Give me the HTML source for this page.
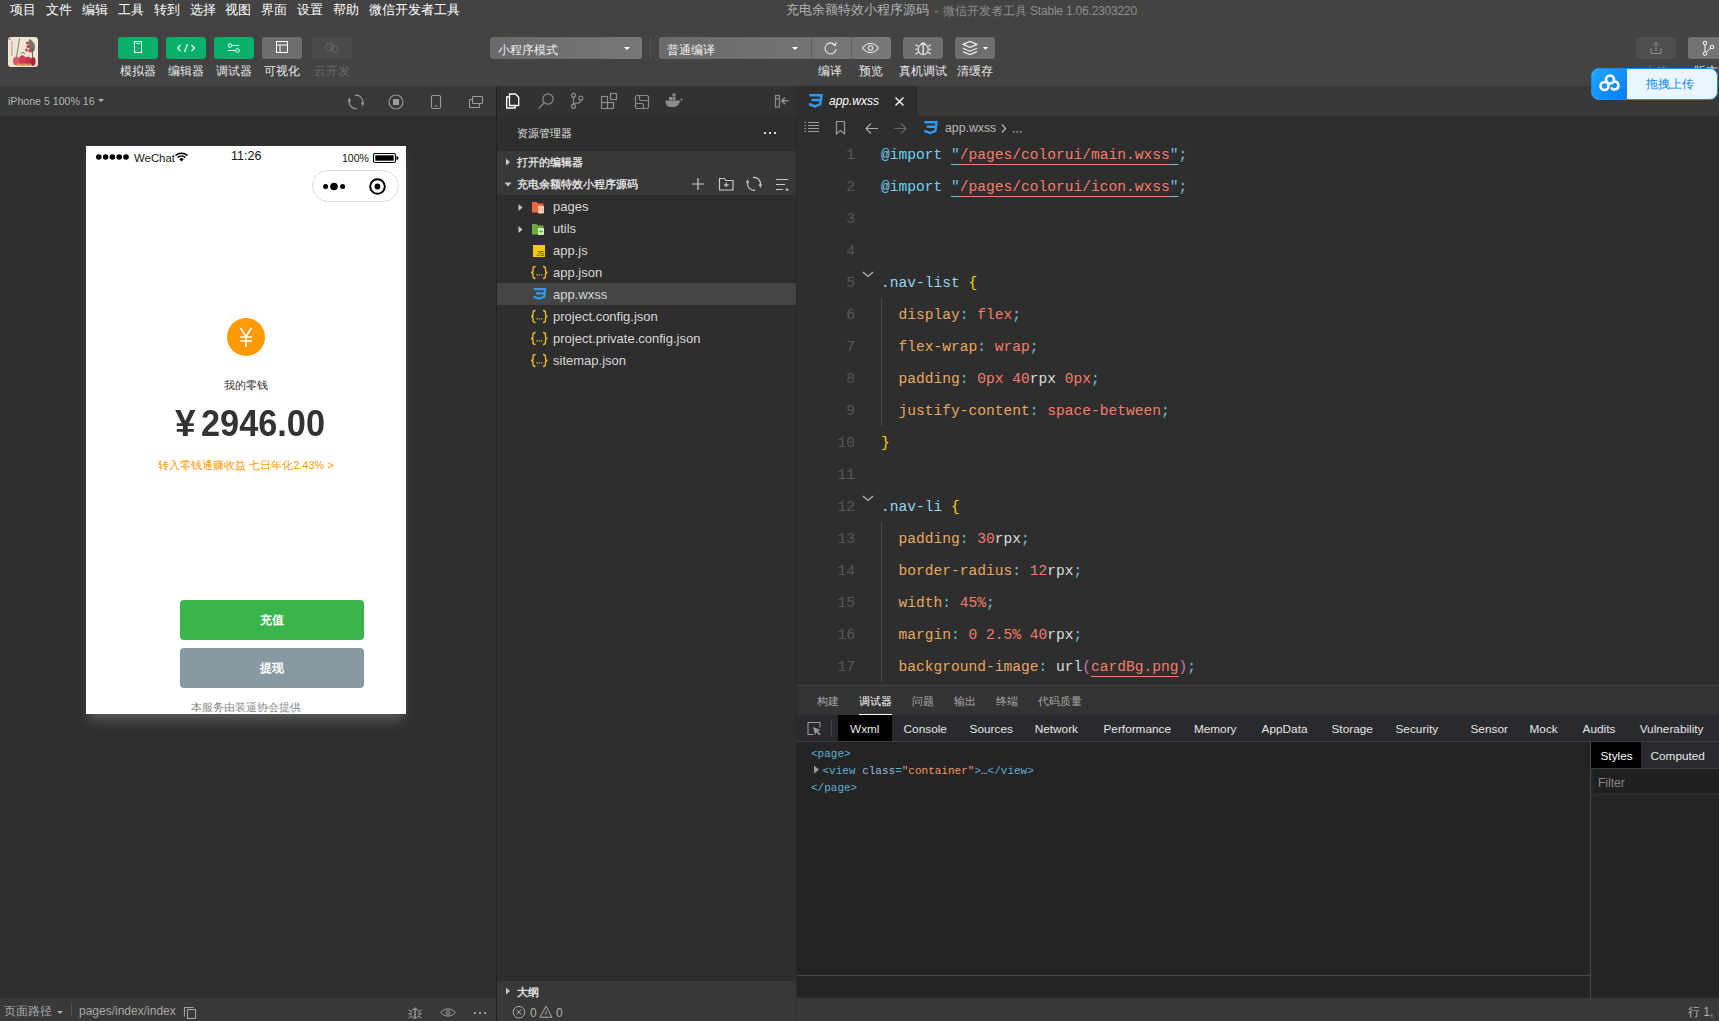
<!DOCTYPE html>
<html><head><meta charset="utf-8">
<style>
*{margin:0;padding:0;box-sizing:border-box}
html,body{width:1719px;height:1021px;overflow:hidden;background:#2e2e2e;font-family:"Liberation Sans",sans-serif;color:#ddd}
.a{position:absolute}
svg{position:absolute;overflow:visible}
#top{left:0;top:0;width:1719px;height:86px;background:#434343}
.menu{top:1.5px;font-size:13px;color:#fff;line-height:16px;white-space:nowrap}
.title{top:2px;left:786px;font-size:12px;color:#8e8e8e;line-height:16px;white-space:nowrap}
.tb{top:37px;width:40px;height:22px;border-radius:3px;background:#07b06a}
.tbl{top:63px;font-size:12px;color:#e8e8e8;line-height:16px;white-space:nowrap;text-align:center;width:60px}
.dd{top:37px;height:22px;border-radius:3px;background:linear-gradient(90deg,#6a6a6a,#777)}
.ddt{top:1.5px;font-size:12px;color:#f0f0f0;line-height:22px;white-space:nowrap}
/* simulator */
#simh{left:0;top:86px;width:496px;height:30px;background:#383838}
#simb{left:0;top:116px;width:496px;height:882px;background:#2f2f2f}
#sims{left:0;top:998px;width:496px;height:23px;background:#393939}
#div1{left:496px;top:86px;width:1px;height:935px;background:#222}
#phone{left:86px;top:146px;width:320px;height:568px;background:#fff;overflow:hidden;box-shadow:0 9px 11px -3px rgba(125,125,125,.55)}
/* explorer */
#exp{left:497px;top:86px;width:300px;height:935px;background:#2e2e2e}
.row{left:0;width:299px;height:22px;line-height:22px;font-size:13px;color:#d8d8d8;white-space:nowrap}
.sec{left:0;width:299px;height:22px;line-height:22px;font-size:11px;font-weight:bold;color:#ddd;background:#383838;white-space:nowrap}
/* editor */
#ed{left:797px;top:86px;width:922px;height:600px;background:#2e2e2e}
#tabs{left:0;top:0;width:922px;height:30px;background:#383838}
.ln{left:0;width:58px;text-align:right;font-family:"Liberation Mono",monospace;font-size:14.58px;color:#575757;line-height:32px;height:32px}
.cl{left:84px;font-family:"Liberation Mono",monospace;font-size:14.58px;line-height:32px;height:32px;white-space:pre;color:#d4d4d4}
.k{color:#e9a75f}.v{color:#f47d6b}.s{color:#f47d6b}.q{color:#6fc3df}.sel{color:#93d6ef}.b{color:#ffd700}.w{color:#dcdcdc}.p{color:#d16fd1}.at{color:#6fcff3}.u{text-decoration:underline;text-underline-offset:5px;text-decoration-thickness:1px}
/* bottom panel */
#bp{left:797px;top:685px;width:922px;height:313px;background:#242424}
#bph{left:0;top:0;width:922px;height:30px;background:#333;border-top:1px solid #444}
#dtt{left:0;top:30px;width:922px;height:27px;background:#292a2d;border-bottom:1px solid #3d3d3d}
.dt{top:1.5px;height:25px;line-height:25px;font-size:11.8px;color:#e6e6e6;white-space:nowrap}
.bt{top:8px;font-size:11.4px;line-height:15px;color:#a8a8a8;white-space:nowrap}
.xm{font-family:"Liberation Mono",monospace;font-size:11px;line-height:16px;white-space:pre;color:#ccc}
.tg{color:#5db0d7}.an{color:#9bbbdc}.av{color:#f29766}.wh{color:#ccc}
.or{top:312px;font-size:11px;line-height:14px;color:#fe9a06;white-space:nowrap}
#sbar{left:797px;top:998px;width:922px;height:23px;background:#393939}
</style></head><body>
<div class="a" id="top">
  <div class="a menu" style="left:10px">项目</div>
  <div class="a menu" style="left:46px">文件</div>
  <div class="a menu" style="left:82px">编辑</div>
  <div class="a menu" style="left:118px">工具</div>
  <div class="a menu" style="left:154px">转到</div>
  <div class="a menu" style="left:190px">选择</div>
  <div class="a menu" style="left:225px">视图</div>
  <div class="a menu" style="left:261px">界面</div>
  <div class="a menu" style="left:297px">设置</div>
  <div class="a menu" style="left:333px">帮助</div>
  <div class="a menu" style="left:369px">微信开发者工具</div>
  <div class="a title" style="font-size:13px;color:#b4b4b4">充电余额特效小程序源码</div><div class="a title" style="left:934.3px;top:3px">-</div><div class="a title" style="left:942.7px;top:3px">微信开发者工具</div><div class="a title" style="left:1030px;top:3px;letter-spacing:-.2px">Stable 1.06.2303220</div>
  <!-- avatar -->
  <div class="a" style="left:8px;top:37px;width:30px;height:30px;border-radius:3px;background:#eee5d2;overflow:hidden">
    <svg width="30" height="30" style="filter:blur(.35px)">
      <rect x="3" y="4" width="1.6" height="15" fill="#9c948a" opacity=".55"/>
      <rect x="1" y="1.5" width="1.2" height="1.5" fill="#c44"/>
      <path d="M11.5 1C10.5 8 9.5 15 8 22" stroke="#5a5550" stroke-width=".9" fill="none" opacity=".8"/>
      <path d="M24.5 12V29" stroke="#4e4a44" stroke-width="1" fill="none" opacity=".8"/>
      <path d="M21 2c3 1 6 4 6 8s-2 5-4 6c-1-3-3-6-2-14z" fill="#55554c" opacity=".8"/>
      <circle cx="19.5" cy="6" r="1.6" fill="#c73a52"/><circle cx="20" cy="9.5" r="1.5" fill="#c73a52"/><circle cx="18.5" cy="13" r="1.4" fill="#c94057"/><circle cx="21.5" cy="14" r="1.4" fill="#c94057"/><circle cx="22.5" cy="11" r="1" fill="#c94057"/>
      <ellipse cx="8.5" cy="24" rx="3.6" ry="4.3" fill="#d8596e"/>
      <ellipse cx="14.5" cy="23.5" rx="3.8" ry="5.2" fill="#cf3c56"/>
      <ellipse cx="20" cy="24" rx="3.2" ry="4.3" fill="#c8324b"/>
      <ellipse cx="25" cy="24.5" rx="2.6" ry="4.3" fill="#a82a3a"/>
      <rect x="9" y="26.5" width="14" height="2.5" fill="#d9a44a" opacity=".7"/>
      <path d="M13 17l2-2 2 2" stroke="#4c6b4c" stroke-width=".8" fill="none"/>
    </svg>
  </div>
  <!-- green buttons -->
  <div class="a tb" style="left:118px"><svg width="40" height="22"><rect x="16.5" y="4.5" width="7" height="11" fill="none" stroke="#fff" stroke-width="1"/><line x1="18" y1="6.5" x2="22" y2="6.5" stroke="#fff"/></svg></div>
  <div class="a tb" style="left:166px"><svg width="40" height="22"><path d="M14.5 8l-3 3 3 3M25.5 8l3 3-3 3M21.5 7l-3 8" fill="none" stroke="#fff" stroke-width="1.1"/></svg></div>
  <div class="a tb" style="left:214px"><svg width="40" height="22"><line x1="14" y1="8.5" x2="25" y2="8.5" stroke="#fff"/><line x1="14" y1="13.5" x2="25" y2="13.5" stroke="#fff"/><circle cx="16" cy="8.5" r="1.8" fill="#07b06a" stroke="#fff"/><circle cx="23.5" cy="13.5" r="1.8" fill="#07b06a" stroke="#fff"/></svg></div>
  <div class="a tb" style="left:262px;background:#6e6e6e"><svg width="40" height="22"><rect x="14.5" y="4.5" width="11" height="11" fill="none" stroke="#fff"/><line x1="14.5" y1="8" x2="25.5" y2="8" stroke="#fff"/><line x1="18" y1="8" x2="18" y2="15.5" stroke="#fff"/></svg></div>
  <div class="a tb" style="left:312px;background:#4b4b4b"><svg width="40" height="22"><circle cx="17.5" cy="10" r="3.8" fill="none" stroke="#6a6a6a"/><circle cx="22.5" cy="12" r="3.5" fill="none" stroke="#6a6a6a"/></svg></div>
  <div class="a tbl" style="left:108px">模拟器</div>
  <div class="a tbl" style="left:156px">编辑器</div>
  <div class="a tbl" style="left:204px">调试器</div>
  <div class="a tbl" style="left:252px">可视化</div>
  <div class="a tbl" style="left:302px;color:#6a6a6a">云开发</div>
  <!-- dropdowns -->
  <div class="a dd" style="left:490px;width:152px"><div class="a ddt" style="left:8px">小程序模式</div><svg width="152" height="22"><path d="M134 10h6l-3 3z" fill="#fff"/></svg></div>
  <div class="a" style="left:650px;top:37px;width:1px;height:22px;background:#555"></div>
  <div class="a dd" style="left:659px;width:232px;background:linear-gradient(90deg,#6b6b6b,#787878)">
    <div class="a ddt" style="left:8px">普通编译</div>
    <svg width="232" height="22"><path d="M133 10h6l-3 3z" fill="#fff"/>
      <line x1="152.5" y1="0" x2="152.5" y2="22" stroke="#5e5e5e"/><line x1="192.5" y1="0" x2="192.5" y2="22" stroke="#5e5e5e"/>
      <path d="M176 8.2A5.5 5.5 0 1 0 177 12" fill="none" stroke="#e8e8e8" stroke-width="1.1"/><path d="M173.5 7.2l2.8 1.2 0.8-3" fill="none" stroke="#e8e8e8" stroke-width="1.1"/>
      <path d="M203.5 11c2.5-3.5 5-4.5 8-4.5s5.5 1 8 4.5c-2.5 3.5-5 4.5-8 4.5s-5.5-1-8-4.5z" fill="none" stroke="#e8e8e8" stroke-width="1.1"/><circle cx="211.5" cy="11" r="2.2" fill="none" stroke="#e8e8e8" stroke-width="1.1"/>
    </svg>
  </div>
  <div class="a tb" style="left:903px;background:#6e6e6e"><svg width="40" height="22"><g fill="none" stroke="#eaeaea" stroke-width="1.1"><ellipse cx="20.2" cy="12.4" rx="5" ry="5.3"/><path d="M18 7.2a2.4 2.2 0 0 1 4.4 0"/><path d="M15.2 9.3l-2.8-1.6M15 12.2h-2.8M15.3 15.2l-2.8 2M25.2 9.3l2.8-1.6M25.4 12.2h2.8M25.1 15.2l2.8 2"/></g><line x1="20.2" y1="7.5" x2="20.2" y2="17.5" stroke="#d8d8d8" stroke-width="1.6"/></svg></div>
  <div class="a tb" style="left:955px;background:#6e6e6e"><svg width="40" height="22"><g fill="none" stroke="#eaeaea" stroke-width="1.2" stroke-linejoin="round"><path d="M8 7.4l7-3 7 3-7 3z"/><path d="M8 11.2l7 3 7-3M8 14.6l7 3 7-3"/></g><path d="M28 10h5l-2.5 2.8z" fill="#fff"/></svg></div>
  <div class="a tbl" style="left:800px">编译</div>
  <div class="a tbl" style="left:841px">预览</div>
  <div class="a tbl" style="left:893px">真机调试</div>
  <div class="a tbl" style="left:945px">清缓存</div>
  <div class="a tbl" style="left:1626px;color:#777">上传</div>
  <div class="a tbl" style="left:1678px;width:80px">版本管理</div>
  <!-- right buttons -->
  <div class="a tb" style="left:1636px;background:#4e4e4e"><svg width="40" height="22"><path d="M15 11v5.5h10V11" fill="none" stroke="#8a8a8a"/><path d="M20 14V5.5M17 8.5l3-3 3 3" fill="none" stroke="#8a8a8a"/></svg></div>
  <div class="a tb" style="left:1688px;width:40px;background:#737373"><svg width="40" height="22"><circle cx="17" cy="6" r="1.8" fill="none" stroke="#fff"/><circle cx="17" cy="16.5" r="1.8" fill="none" stroke="#fff"/><circle cx="24" cy="10" r="1.8" fill="none" stroke="#fff"/><line x1="17" y1="8" x2="17" y2="14.5" stroke="#fff"/><line x1="18.6" y1="15.2" x2="22.4" y2="11.1" stroke="#fff"/></svg></div>
</div>

<div class="a" id="simh">
  <div class="a" style="left:8px;top:8px;font-size:10.6px;line-height:14px;color:#b4b4b4;white-space:nowrap">iPhone 5 100% 16</div>
  <svg width="496" height="30"><path d="M98 13h6l-3 3z" fill="#b4b4b4"/>
    <g fill="none" stroke="#9a9a9a" stroke-width="1.1">
      <path d="M354.8 9.2A6.8 6.8 0 0 1 362.7 17M357.2 22.6A6.8 6.8 0 0 1 349.3 14.8"/>
      <circle cx="396" cy="16" r="7"/>
      <rect x="431.5" y="9.5" width="9" height="13" rx="1.2"/><line x1="434.5" y1="20" x2="437.5" y2="20"/>
      <rect x="472.5" y="10.5" width="10" height="7" rx="0.8"/><path d="M472.5 13.5h-3v8h10v-4"/>
    </g>
    <rect x="393" y="13" width="6" height="6" fill="#9a9a9a"/><path d="M360.9 16.5h3.6l-1.8 3.8zM347.5 15.3h3.6l-1.8-3.8z" fill="#9a9a9a"/>
  </svg>
</div>
<div class="a" id="simb"></div>
<div class="a" id="sims">
  <div class="a" style="left:4px;top:6px;font-size:12px;line-height:15px;color:#a8a8a8;white-space:nowrap">页面路径</div>
  <svg width="496" height="23"><path d="M57 13h6l-3 3z" fill="#a8a8a8"/><line x1="71.5" y1="6" x2="71.5" y2="18" stroke="#555"/>
    <g fill="none" stroke="#a0a0a0" stroke-width="1.1"><rect x="187.5" y="11.5" width="8" height="9"/><path d="M184.5 18.5v-9h9"/></g>
    <g fill="none" stroke="#a0a0a0" stroke-width="1"><ellipse cx="415" cy="15.6" rx="4.2" ry="4.5"/><path d="M413.2 11.3a1.9 1.8 0 0 1 3.6 0"/><line x1="415" y1="11.5" x2="415" y2="20" stroke-width="1.4"/><path d="M411 13.4l-2.5-1.4M410.8 15.9h-2.6M411 18.4l-2.5 1.7M419 13.4l2.5-1.4M419.2 15.9h2.6M419 18.4l2.5 1.7"/>
    <path d="M441 14.5c2-2.8 4-3.5 7-3.5s5 .7 7 3.5c-2 2.8-4 3.5-7 3.5s-5-.7-7-3.5z"/><circle cx="448" cy="14.5" r="1.8"/></g>
    <g fill="#a0a0a0"><rect x="474" y="14" width="2" height="2"/><rect x="479" y="14" width="2" height="2"/><rect x="484" y="14" width="2" height="2"/></g>
  </svg>
  <div class="a" style="left:79px;top:6px;font-size:12px;line-height:15px;color:#a8a8a8;white-space:nowrap">pages/index/index</div>
</div>
<div class="a" id="div1"></div>
<div class="a" id="phone">
  <svg width="320" height="60">
    <g fill="#000"><circle cx="12.8" cy="11" r="2.8"/><circle cx="19.6" cy="11" r="2.8"/><circle cx="26.4" cy="11" r="2.8"/><circle cx="33.2" cy="11" r="2.8"/><circle cx="40" cy="11" r="2.8"/></g>
    <path d="M89.5 9.5a9 9 0 0 1 12 0M91.5 11.5a6 6 0 0 1 8 0" fill="none" stroke="#000" stroke-width="1.6"/><path d="M93.3 13.2a3 3 0 0 1 4.4 0L95.5 15.5z" fill="#000"/>
    <rect x="287.5" y="7.5" width="22" height="9" rx="1.5" fill="none" stroke="#000" stroke-width="1.1"/><rect x="289.3" y="9.3" width="18.4" height="5.4" fill="#000"/><path d="M310.5 10v4a2 2 0 0 0 0-4z" fill="#000"/>
    <rect x="226.5" y="24.5" width="86" height="31" rx="15.5" fill="#fff" stroke="#dcdcdc"/>
    <circle cx="239.6" cy="40.5" r="2.5" fill="#000"/><circle cx="248" cy="40.5" r="3.8" fill="#000"/><circle cx="256.6" cy="40.5" r="2.5" fill="#000"/>
    <circle cx="291.5" cy="40.5" r="7.3" fill="none" stroke="#000" stroke-width="2"/><circle cx="291.5" cy="40.5" r="2.9" fill="#000"/>
  </svg>
  <div class="a" style="left:48px;top:4.5px;font-size:11.4px;line-height:14px;color:#222;white-space:nowrap">WeChat</div>
  <div class="a" style="left:145px;top:3px;font-size:12.5px;line-height:15px;color:#111;white-space:nowrap">11:26</div>
  <div class="a" style="left:256px;top:6px;font-size:10.5px;line-height:12px;color:#111;white-space:nowrap">100%</div>
  <div class="a" style="left:141px;top:171.5px;width:38px;height:38px;border-radius:50%;background:#fe9a06"></div>
  <svg width="320" height="240" style="top:0"><path d="M154.5 182l5.5 8.5 5.5-8.5M160 190.5v10.5M154 191h12M154 195h12" fill="none" stroke="#fff" stroke-width="1.7"/></svg>
  <div class="a" style="left:0;top:232px;width:320px;text-align:center;font-size:11px;line-height:14px;color:#333">我的零钱</div>
  <div class="a" id="yen" style="left:89px;transform:scale(1.06,1.05);transform-origin:0 29px;top:258px;font-size:35px;font-weight:bold;line-height:40px;color:#333;white-space:nowrap">¥</div><div class="a" id="amt" style="left:115px;top:258px;font-size:35px;font-weight:bold;line-height:40px;color:#333;white-space:nowrap;transform:scale(.98,1.04);transform-origin:0 29px">2946.00</div>
  <div class="a or" style="left:72.1px">转入零钱通赚收益</div><div class="a or" style="left:163.2px">七日年化</div><div class="a or" style="left:207.2px">2.43% &gt;</div>
  <div class="a" style="left:94px;top:454px;width:184px;height:40px;border-radius:4px;background:#39b54a;color:#fff;font-size:12px;font-weight:bold;line-height:40px;text-align:center">充值</div>
  <div class="a" style="left:94px;top:502px;width:184px;height:40px;border-radius:4px;background:#8799a3;color:#fff;font-size:12px;font-weight:bold;line-height:40px;text-align:center">提现</div>
  <div class="a" style="left:0;top:553px;width:320px;text-align:center;font-size:11px;line-height:16px;color:#888;white-space:nowrap">本服务由装逼协会提供</div>
</div>

<div class="a" id="exp">
  <div class="a" style="left:299px;top:30px;width:1px;height:865px;background:#282828"></div>
  <div class="a" style="left:0;top:0;width:299px;height:29.5px;background:#323232"></div>
  <svg width="300" height="300">
    <!-- files icon -->
    <g fill="none" stroke="#fff" stroke-width="1.3" transform="translate(0,1.5)"><path d="M12.5 9.5h-2.8v11h8.5v-2.6"/><path d="M12.5 6.5h6l3.2 3.2v8.3h-9.2z"/></g>
    <g fill="none" stroke="#8c8c8c" stroke-width="1.2">
      <circle cx="51" cy="13" r="5.2"/><line x1="47.3" y1="16.8" x2="41.5" y2="22.5"/>
      <circle cx="76.5" cy="9.3" r="2"/><circle cx="76.5" cy="20.3" r="2"/><circle cx="83.8" cy="12.2" r="2"/><line x1="76.5" y1="11.3" x2="76.5" y2="18.3"/><path d="M83.8 14.2c0 2.5-1.5 3-7.3 3.3"/>
      <rect x="104.5" y="10.5" width="6" height="6"/><rect x="104.5" y="16.5" width="6" height="6"/><rect x="110.5" y="16.5" width="6" height="6"/><rect x="113.5" y="7.5" width="6" height="6"/>
      <rect x="138.5" y="9.5" width="13" height="13" rx="1.5"/><path d="M142.5 9.5V13q0 1.5 1.5 1.5h7.5M138.5 17.5h6.5q1.5 0 1.5 1.5v3.5"/>
      <rect x="278.5" y="9.5" width="4" height="11.5"/><path d="M278.5 12.8h4"/>
    </g>
    <path d="M168.5 14.5h14.5c-.5 4-3 6.5-7.5 6.5h-2c-3.5 0-5-2.5-5-6.5z" fill="#8c8c8c"/><rect x="172" y="11" width="3" height="3" fill="#8c8c8c"/><rect x="175.5" y="11" width="3" height="3" fill="#8c8c8c"/><rect x="175.5" y="7.5" width="3" height="3" fill="#8c8c8c"/><path d="M183 13.5l2.5-1.5-.5 3z" fill="#8c8c8c"/>
    <!-- more -->
    <g fill="#ddd"><rect x="267" y="46" width="2" height="2"/><rect x="272" y="46" width="2" height="2"/><rect x="277" y="46" width="2" height="2"/></g><path d="M285 14.8h6.5M288 11.5l-3.2 3.3 3.2 3.3" fill="none" stroke="#8c8c8c" stroke-width="1.6"/>
  </svg>
  <div class="a" style="left:20px;top:40px;font-size:11px;line-height:14px;color:#e0e0e0;white-space:nowrap">资源管理器</div>
  <div class="a sec" style="top:65px"><svg width="20" height="22"><path d="M9 7.5l4 3.5-4 3.5z" fill="#c8c8c8"/></svg><div class="a" style="left:20px;top:0">打开的编辑器</div></div>
  <div class="a sec" style="top:87px;height:22px"><svg width="300" height="22"><path d="M7.5 9.5h7l-3.5 4z" fill="#c8c8c8"/>
    <g fill="none" stroke="#c8c8c8" stroke-width="1.2"><path d="M201 5v12M195 11h12"/><path d="M222.5 5.5v11.5h13.5v-9.5h-7l-1.5-2z"/><path d="M229.3 9.5v4.5M227 11.8h4.6"/>
    <path d="M255.9 4.4A6.5 6.5 0 0 1 263.4 11.9M258.1 17.2A6.5 6.5 0 0 1 250.6 9.7"/>
    <path d="M279 6.5h12M279 11.5h9M279 16.5h7"/></g><path d="M288 17.5l2-2.5 2 2.5z" fill="#c8c8c8"/><path d="M261.7 11.3h3.4l-1.7 3.6zM248.9 9.8h3.4l-1.7-3.6z" fill="#c8c8c8"/></svg>
    <div class="a" style="left:20px;top:0">充电余额特效小程序源码</div></div>
  <!-- tree -->
  <div class="a" style="left:0;top:197px;width:299px;height:22px;background:#454545"></div>
  <svg width="300" height="300" style="top:110px">
    <path d="M21.5 8l4 3.5-4 3.5z" fill="#c8c8c8"/><path d="M21.5 30l4 3.5-4 3.5z" fill="#c8c8c8"/>
    <!-- pages folder -->
    <path d="M35 6h4.5l1.5 1.5h5.5v9H35z" fill="#f2673e"/><rect x="41" y="10" width="6" height="7.5" rx="1" fill="#ffcfbf"/><path d="M43 12.5l-1 1.2 1 1.2M45 12.5l1 1.2-1 1.2" stroke="#e85a33" stroke-width=".6" fill="none"/>
    <!-- utils folder -->
    <path d="M35 28h4.5l1.5 1.5h5.5v9H35z" fill="#6aab3b"/><rect x="41" y="32" width="6" height="7" rx="1" fill="#d6f0c0"/><path d="M44 33.5v4M42 35.5h4" stroke="#5aa02e" stroke-width=".8"/>
    <!-- js -->
    <rect x="36" y="49" width="12" height="12" fill="#f5c518"/><text x="39.5" y="59.5" font-family="Liberation Sans" font-size="6.5" fill="#333">JS</text>
    <!-- json braces -->
    <g transform="translate(0,70)"><path d="M38.5 0.5c-2 0-2.5.8-2.5 2.2v2c0 1.2-.6 1.8-2 1.8 1.4 0 2 .6 2 1.8v2c0 1.4.5 2.2 2.5 2.2M46 0.5c2 0 2.5.8 2.5 2.2v2c0 1.2.6 1.8 2 1.8-1.4 0-2 .6-2 1.8v2c0 1.4-.5 2.2-2.5 2.2" fill="none" stroke="#f5bf2a" stroke-width="1.3"/><rect x="39.4" y="8.2" width="1.2" height="1.3" fill="#f5bf2a"/><rect x="41.7" y="8.2" width="1.2" height="1.3" fill="#f5bf2a"/><rect x="44" y="8.2" width="1.2" height="1.3" fill="#f5bf2a"/></g><g transform="translate(0,114)"><path d="M38.5 0.5c-2 0-2.5.8-2.5 2.2v2c0 1.2-.6 1.8-2 1.8 1.4 0 2 .6 2 1.8v2c0 1.4.5 2.2 2.5 2.2M46 0.5c2 0 2.5.8 2.5 2.2v2c0 1.2.6 1.8 2 1.8-1.4 0-2 .6-2 1.8v2c0 1.4-.5 2.2-2.5 2.2" fill="none" stroke="#f5bf2a" stroke-width="1.3"/><rect x="39.4" y="8.2" width="1.2" height="1.3" fill="#f5bf2a"/><rect x="41.7" y="8.2" width="1.2" height="1.3" fill="#f5bf2a"/><rect x="44" y="8.2" width="1.2" height="1.3" fill="#f5bf2a"/></g><g transform="translate(0,136)"><path d="M38.5 0.5c-2 0-2.5.8-2.5 2.2v2c0 1.2-.6 1.8-2 1.8 1.4 0 2 .6 2 1.8v2c0 1.4.5 2.2 2.5 2.2M46 0.5c2 0 2.5.8 2.5 2.2v2c0 1.2.6 1.8 2 1.8-1.4 0-2 .6-2 1.8v2c0 1.4-.5 2.2-2.5 2.2" fill="none" stroke="#f5bf2a" stroke-width="1.3"/><rect x="39.4" y="8.2" width="1.2" height="1.3" fill="#f5bf2a"/><rect x="41.7" y="8.2" width="1.2" height="1.3" fill="#f5bf2a"/><rect x="44" y="8.2" width="1.2" height="1.3" fill="#f5bf2a"/></g><g transform="translate(0,158)"><path d="M38.5 0.5c-2 0-2.5.8-2.5 2.2v2c0 1.2-.6 1.8-2 1.8 1.4 0 2 .6 2 1.8v2c0 1.4.5 2.2 2.5 2.2M46 0.5c2 0 2.5.8 2.5 2.2v2c0 1.2.6 1.8 2 1.8-1.4 0-2 .6-2 1.8v2c0 1.4-.5 2.2-2.5 2.2" fill="none" stroke="#f5bf2a" stroke-width="1.3"/><rect x="39.4" y="8.2" width="1.2" height="1.3" fill="#f5bf2a"/><rect x="41.7" y="8.2" width="1.2" height="1.3" fill="#f5bf2a"/><rect x="44" y="8.2" width="1.2" height="1.3" fill="#f5bf2a"/></g>
    <!-- css -->
    <path d="M36.8 93.2H48.2L47.2 100.8 42.2 102.6 37.6 101.1V100M38.9 97.3H47.5" fill="none" stroke="#2d9cf0" stroke-width="2.2"/>
  </svg>
  <div class="a row" style="top:110px;left:56px">pages</div>
  <div class="a row" style="top:132px;left:56px">utils</div>
  <div class="a row" style="top:154px;left:56px">app.js</div>
  <div class="a row" style="top:176px;left:56px">app.json</div>
  <div class="a row" style="top:198px;left:56px">app.wxss</div>
  <div class="a row" style="top:220px;left:56px">project.config.json</div>
  <div class="a row" style="top:242px;left:56px">project.private.config.json</div>
  <div class="a row" style="top:264px;left:56px">sitemap.json</div>
  <!-- outline + status -->
  <div class="a" style="left:0;top:895px;width:299px;height:40px;background:#383838"></div>
  <svg width="300" height="40" style="top:895px"><path d="M9 6.5l4 3.5-4 3.5z" fill="#c8c8c8"/>
    <g fill="none" stroke="#b0b0b0" stroke-width="1" transform="translate(0,1.7)"><circle cx="22" cy="29.5" r="5.8"/><path d="M19.5 27l5 5M24.5 27l-5 5"/><path d="M49 23.5l-6 11h12z"/><line x1="49" y1="28" x2="49" y2="32"/></g>
  </svg>
  <div class="a" style="left:20px;top:899px;font-size:11px;font-weight:bold;line-height:14px;color:#e0e0e0">大纲</div>
  <div class="a" style="left:33px;top:920px;font-size:12px;line-height:15px;color:#b0b0b0">0</div>
  <div class="a" style="left:59px;top:920px;font-size:12px;line-height:15px;color:#b0b0b0">0</div>
</div>

<div class="a" id="ed">
  <div class="a" id="tabs"></div>
  <div class="a" style="left:0;top:0;width:119px;height:30px;background:#2e2e2e"></div><div class="a" style="left:119px;top:0;width:1px;height:30px;background:#282828"></div>
  <svg width="922" height="60">
    <path d="M12.3 9.2H24.5L23.3 18.2 18 20.3 13 18.5V17.2M14.5 14H23.8" fill="none" stroke="#2d9cf0" stroke-width="2.5"/>
    <path d="M98.5 11.5l8 8M106.5 11.5l-8 8" stroke="#f0f0f0" stroke-width="1.5"/>
    <g stroke="#9a9a9a" stroke-width="1" fill="none"><path d="M11 36.5h11M11 39.5h11M11 42.5h11M11 45.5h11"/></g>
    <g fill="#9a9a9a"><rect x="7.5" y="36" width="1.5" height="1"/><rect x="7.5" y="39" width="1.5" height="1"/><rect x="7.5" y="42" width="1.5" height="1"/><rect x="7.5" y="45" width="1.5" height="1"/></g>
    <path d="M39.5 35.5v12.5l4-3.5 4 3.5V35.5z" fill="none" stroke="#9a9a9a" stroke-width="1.2"/>
    <path d="M69 42.5h12M74 37.5l-5 5 5 5" fill="none" stroke="#a8a8a8" stroke-width="1.2"/>
    <path d="M97 42.5h12M104 37.5l5 5-5 5" fill="none" stroke="#666" stroke-width="1.2"/>
    <path d="M127.5 36.3H139.5L138.4 45 133.3 47 128.5 45.3V44M129.8 40.8H138.8" fill="none" stroke="#2d9cf0" stroke-width="2.4"/>
    <path d="M205 38.5l3.5 4-3.5 4" fill="none" stroke="#bbb" stroke-width="1.2"/>
    <g fill="#aaa"><rect x="216" y="45" width="1.5" height="1.5"/><rect x="219.5" y="45" width="1.5" height="1.5"/><rect x="223" y="45" width="1.5" height="1.5"/></g>
  </svg>
  <div class="a" style="left:32px;top:7px;font-size:12px;font-style:italic;line-height:16px;color:#fff;white-space:nowrap">app.wxss</div>
  <div class="a" style="left:148px;top:34px;font-size:12.3px;line-height:16px;color:#b8b8b8;white-space:nowrap">app.wxss</div>
  <svg width="922" height="600">
    <path d="M66 186l5 4.5 5-4.5M66 410l5 4.5 5-4.5" fill="none" stroke="#bbb" stroke-width="1.1"/>
    <line x1="84.5" y1="212" x2="84.5" y2="340" stroke="#4a4a4a"/>
    <line x1="84.5" y1="436" x2="84.5" y2="596" stroke="#4a4a4a"/>
  </svg>
  <div class="a ln" style="top:53px">1</div>
  <div class="a cl" style="top:53px"><span class="at">@import</span> <span class="q u">"</span><span class="s u">/pages/colorui/main.wxss</span><span class="q u">"</span><span class="q">;</span></div>
  <div class="a ln" style="top:85px">2</div>
  <div class="a cl" style="top:85px"><span class="at">@import</span> <span class="q u">"</span><span class="s u">/pages/colorui/icon.wxss</span><span class="q u">"</span><span class="q">;</span></div>
  <div class="a ln" style="top:117px">3</div>
  <div class="a ln" style="top:149px">4</div>
  <div class="a ln" style="top:181px">5</div>
  <div class="a cl" style="top:181px"><span class="sel">.nav-list</span> <span class="b">{</span></div>
  <div class="a ln" style="top:213px">6</div>
  <div class="a cl" style="top:213px">  <span class="k">display</span><span class="q">:</span> <span class="v">flex</span><span class="q">;</span></div>
  <div class="a ln" style="top:245px">7</div>
  <div class="a cl" style="top:245px">  <span class="k">flex-wrap</span><span class="q">:</span> <span class="v">wrap</span><span class="q">;</span></div>
  <div class="a ln" style="top:277px">8</div>
  <div class="a cl" style="top:277px">  <span class="k">padding</span><span class="q">:</span> <span class="v">0px</span> <span class="v">40</span><span class="w">rpx</span> <span class="v">0px</span><span class="q">;</span></div>
  <div class="a ln" style="top:309px">9</div>
  <div class="a cl" style="top:309px">  <span class="k">justify-content</span><span class="q">:</span> <span class="v">space-between</span><span class="q">;</span></div>
  <div class="a ln" style="top:341px">10</div>
  <div class="a cl" style="top:341px"><span class="b">}</span></div>
  <div class="a ln" style="top:373px">11</div>
  <div class="a ln" style="top:405px">12</div>
  <div class="a cl" style="top:405px"><span class="sel">.nav-li</span> <span class="b">{</span></div>
  <div class="a ln" style="top:437px">13</div>
  <div class="a cl" style="top:437px">  <span class="k">padding</span><span class="q">:</span> <span class="v">30</span><span class="w">rpx</span><span class="q">;</span></div>
  <div class="a ln" style="top:469px">14</div>
  <div class="a cl" style="top:469px">  <span class="k">border-radius</span><span class="q">:</span> <span class="v">12</span><span class="w">rpx</span><span class="q">;</span></div>
  <div class="a ln" style="top:501px">15</div>
  <div class="a cl" style="top:501px">  <span class="k">width</span><span class="q">:</span> <span class="v">45%</span><span class="q">;</span></div>
  <div class="a ln" style="top:533px">16</div>
  <div class="a cl" style="top:533px">  <span class="k">margin</span><span class="q">:</span> <span class="v">0</span> <span class="v">2.5%</span> <span class="v">40</span><span class="w">rpx</span><span class="q">;</span></div>
  <div class="a ln" style="top:565px">17</div>
  <div class="a cl" style="top:565px">  <span class="k">background-image</span><span class="q">:</span> <span class="w">url</span><span class="p">(</span><span class="s u">cardBg.png</span><span class="p">)</span><span class="q">;</span></div>
</div>

<div class="a" id="bp">
  <div class="a" id="bph">
    <div class="a bt" style="left:20px">构建</div>
    <div class="a bt" style="left:62px;color:#fff">调试器</div>
    <div class="a bt" style="left:115px">问题</div>
    <div class="a bt" style="left:157px">输出</div>
    <div class="a bt" style="left:198.5px">终端</div>
    <div class="a bt" style="left:241px">代码质量</div>
    <div class="a" style="left:62px;top:28px;width:33px;height:2px;background:#fff"></div>
  </div>
  <div class="a" id="dtt">
    <div class="a" style="left:41px;top:0;width:54px;height:26px;background:#000"></div>
    <svg width="60" height="26"><path d="M16.5 19.5h-5.5v-12h12v5" fill="none" stroke="#9a9a9a" stroke-width="1.1"/><path d="M16 12l7.5 3-3 1 3 3-1.2 1.2-3-3-1 3z" fill="#9a9a9a"/><line x1="34.5" y1="5" x2="34.5" y2="21" stroke="#444"/></svg>
    <div class="a dt" style="left:53.0px">Wxml</div><div class="a dt" style="left:106.6px">Console</div><div class="a dt" style="left:172.6px">Sources</div><div class="a dt" style="left:237.7px">Network</div><div class="a dt" style="left:306.5px">Performance</div><div class="a dt" style="left:396.9px">Memory</div><div class="a dt" style="left:464.6px">AppData</div><div class="a dt" style="left:534.5px">Storage</div><div class="a dt" style="left:598.5px">Security</div><div class="a dt" style="left:673.5px">Sensor</div><div class="a dt" style="left:732.5px">Mock</div><div class="a dt" style="left:785.6px">Audits</div><div class="a dt" style="left:842.7px">Vulnerability</div>
  </div>
  <div class="a" style="left:793px;top:56px;width:1px;height:257px;background:#4a4a4a"></div>
  <div class="a" style="left:794px;top:57px;width:50px;height:26px;background:#000"></div>
  <div class="a" style="left:794px;top:57px;width:128px;height:26px;background:#292a2d"></div>
  <div class="a" style="left:794px;top:57px;width:50px;height:26px;background:#000"></div>
  <div class="a" style="left:794px;top:83px;width:128px;height:1px;background:#3d3d3d"></div>
  <div class="a" style="left:797px;top:84px;width:125px;height:24px;background:#202020"></div>
  <div class="a" style="left:794px;top:108px;width:128px;height:3px;background:#2a2a2a"></div>
  <div class="a dt" style="left:803.5px;top:58.5px;color:#fff">Styles</div>
  <div class="a dt" style="left:853.5px;top:58.5px">Computed</div>
  <div class="a" style="left:801px;top:91px;font-size:12px;line-height:14px;color:#888">Filter</div>
  <div class="a" style="left:0;top:290px;width:793px;height:1px;background:#4a4a4a"></div>
  <div class="a xm" style="left:14px;top:61px"><span class="tg">&lt;page&gt;</span></div>
  <svg width="30" height="100" style="top:0"><path d="M17 80.5l5 4-5 4z" fill="#9a9a9a"/></svg>
  <div class="a xm" style="left:25.5px;top:78px"><span class="tg">&lt;view</span> <span class="an">class</span><span class="tg">=</span><span class="av">"container"</span><span class="tg">&gt;</span><span class="wh">…</span><span class="tg">&lt;/view&gt;</span></div>
  <div class="a xm" style="left:14px;top:95px"><span class="tg">&lt;/page&gt;</span></div>
</div>
<div class="a" id="sbar"><div class="a" style="left:891px;top:7px;font-size:12px;line-height:15px;color:#b0b0b0;white-space:nowrap">行 1,</div></div>
  <div class="a" style="left:1591px;top:68px;width:127px;height:32px;border-radius:8px;background:#eaf6ff;border:1.5px solid #108ef5;overflow:hidden">
    <div class="a" style="left:0;top:0;width:35px;height:30px;background:linear-gradient(135deg,#1ea7ff,#0a7cf5)"></div>
    <svg width="36" height="30"><circle cx="18" cy="10.5" r="4" fill="none" stroke="#fff" stroke-width="2.6"/><circle cx="12.5" cy="17" r="4" fill="none" stroke="#fff" stroke-width="2.6"/><path d="M19 18.5a4 4 0 1 0 3-6" fill="none" stroke="#fff" stroke-width="2.6"/></svg>
    <div class="a" style="left:54px;top:7px;font-size:12px;line-height:16px;color:#0b86f2;white-space:nowrap">拖拽上传</div>
  </div>
</body></html>
